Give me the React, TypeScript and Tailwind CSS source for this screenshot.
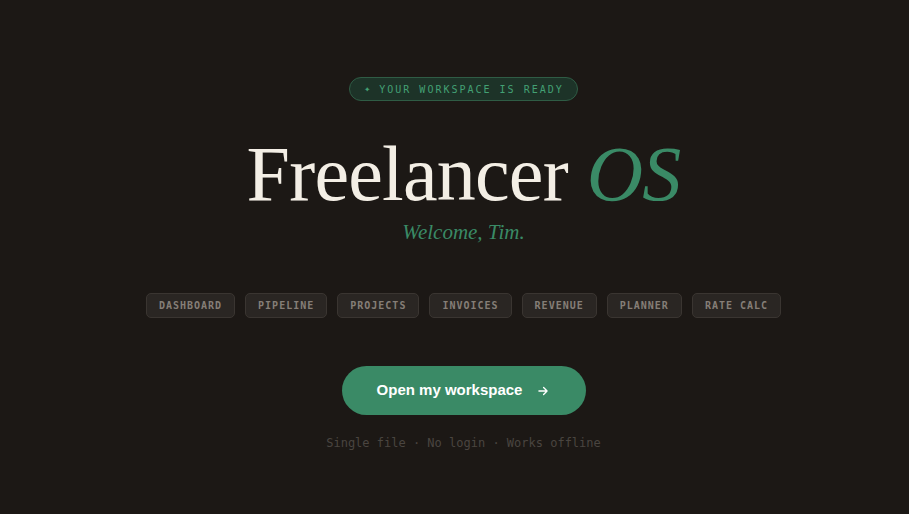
const modules = [
  'Dashboard',
  'Pipeline',
  'Projects',
  'Invoices',
  'Revenue',
  'Planner',
  'Rate Calc',
];

export default function App() {
  return (
    <div className="min-h-screen bg-[#1c1815] flex flex-col items-center pt-[77px] pl-[18px] text-[#f2ede4]">
      <div className="h-[24px] pl-[14px] pr-[13px] flex items-center gap-[9px] rounded-full border border-[#2f5c45] bg-[#1d3328] text-[#43a074] font-['DejaVu_Sans_Mono',monospace] text-[10px] tracking-[0.2em] uppercase">
        <span className="text-[10px] leading-none tracking-normal">✦</span>
        <span>Your workspace is ready</span>
      </div>

      <h1 className="mt-[30px] font-['Liberation_Serif',serif] text-[78px] leading-[86px] tracking-[-0.01em] text-[#f3eee5]">
        Freelancer <em className="text-[#3a8a66]">OS</em>
      </h1>

      <p className="mt-[1px] font-['Liberation_Serif',serif] italic text-[21px] leading-[28px] text-[#3a8a66]">
        Welcome, Tim.
      </p>

      <nav className="mt-[47px] flex gap-[10px]">
        {modules.map((m) => (
          <span
            key={m}
            className="h-[25px] px-[12px] flex items-center rounded-[5px] border border-[#3a3531] bg-[#2a2623] text-[#857e77] font-['DejaVu_Sans_Mono',monospace] font-bold text-[10px] tracking-[0.1em] uppercase"
          >
            {m}
          </span>
        ))}
      </nav>

      <button className="mt-[48px] h-[49px] w-[244px] rounded-full bg-[#3a8a66] flex items-center justify-center gap-[14px] text-white font-['Liberation_Sans',sans-serif] font-bold text-[15px]">
        <span>Open my workspace</span>
        <svg className="w-[14px] h-[14px]" viewBox="0 0 24 24" fill="none" stroke="currentColor" strokeWidth={2.25} strokeLinecap="round" strokeLinejoin="round">
          <path d="M5 12h14M13 6l6 6-6 6" />
        </svg>
      </button>

      <p className="mt-[19px] font-['DejaVu_Sans_Mono',monospace] text-[12px] text-[#4a4540]">
        Single file · No login · Works offline
      </p>
    </div>
  );
}
